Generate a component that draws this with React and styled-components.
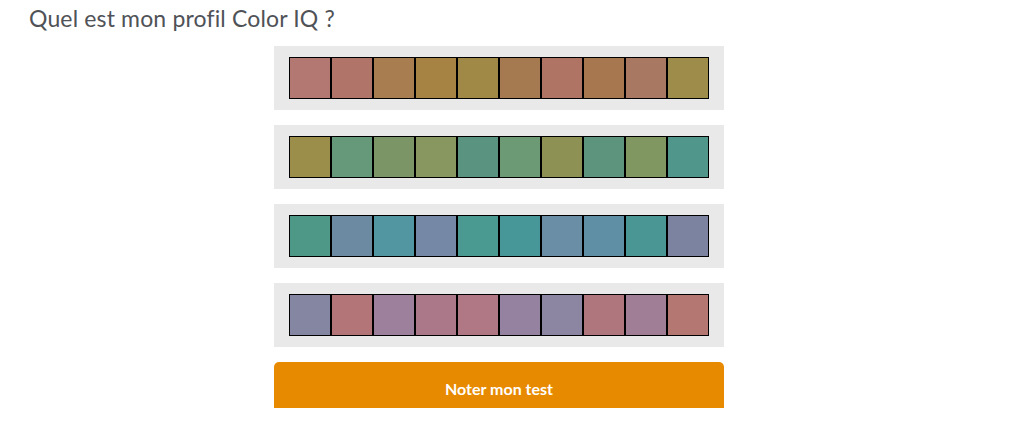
import React from "react";
import styled, { createGlobalStyle } from "styled-components";

const Global = createGlobalStyle`
  html, body { margin: 0; padding: 0; background: #ffffff; }
  body { font-family: Lato, "Open Sans", sans-serif; }
`;

const Page = styled.div`
  width: 1024px;
  height: 434px;
  overflow: hidden;
  display: flex;
  flex-direction: column;
`;

const Title = styled.h1`
  margin: 0;
  padding: 3px 0 0 29px;
  height: 42px;
  box-sizing: border-box;
  font-family: Lato, sans-serif;
  font-weight: 400;
  font-size: 23px;
  letter-spacing: 0.15px;
  line-height: 30px;
  color: #4f5257;
  font-variant-ligatures: none;
`;

const Column = styled.div`
  margin-left: 274px;
  width: 450px;
  display: flex;
  flex-direction: column;
  gap: 15px;
  padding-top: 4px;
`;

const Panel = styled.div`
  background: #e9e9e9;
  height: 64px;
  box-sizing: border-box;
  padding: 11px 15px;
  display: flex;
`;

const Swatch = styled.div`
  width: 42px;
  height: 42px;
  box-sizing: border-box;
  border: 1px solid #000;
  background: ${(p) => p.$c};
`;

const Button = styled.button`
  height: 46px;
  border: none;
  border-radius: 5px 5px 0 0;
  background: #e88a00;
  color: #ffffff;
  font-family: Lato, sans-serif;
  font-weight: 700;
  font-size: 16px;
  padding: 6px 0 0;
  cursor: pointer;
`;

const rows = [
  ["#b47872", "#b17468", "#a87d4f", "#a78343", "#a08947", "#a67a50", "#b07464", "#a77850", "#a87862", "#9d8c4a"],
  ["#9a8e4a", "#66987a", "#7b9566", "#88965f", "#5a9480", "#6b9a74", "#8d9153", "#5d947d", "#809761", "#51968a"],
  ["#4e9887", "#6d8aa3", "#5196a0", "#7588a6", "#4b9a91", "#479698", "#6a8ea6", "#5e8fa4", "#4a9695", "#7c83a0"],
  ["#8486a2", "#b47579", "#9c809c", "#aa7889", "#b07884", "#9482a0", "#8d86a2", "#b0767d", "#a07f96", "#b47771"],
];

export default function App() {
  return (
    <>
      <Global />
      <Page>
        <Title>Quel est mon profil Color IQ ?</Title>
        <Column>
          {rows.map((r, i) => (
            <Panel key={i}>
              {r.map((c, j) => (
                <Swatch key={j} $c={c} />
              ))}
            </Panel>
          ))}
          <Button>Noter mon test</Button>
        </Column>
      </Page>
    </>
  );
}
